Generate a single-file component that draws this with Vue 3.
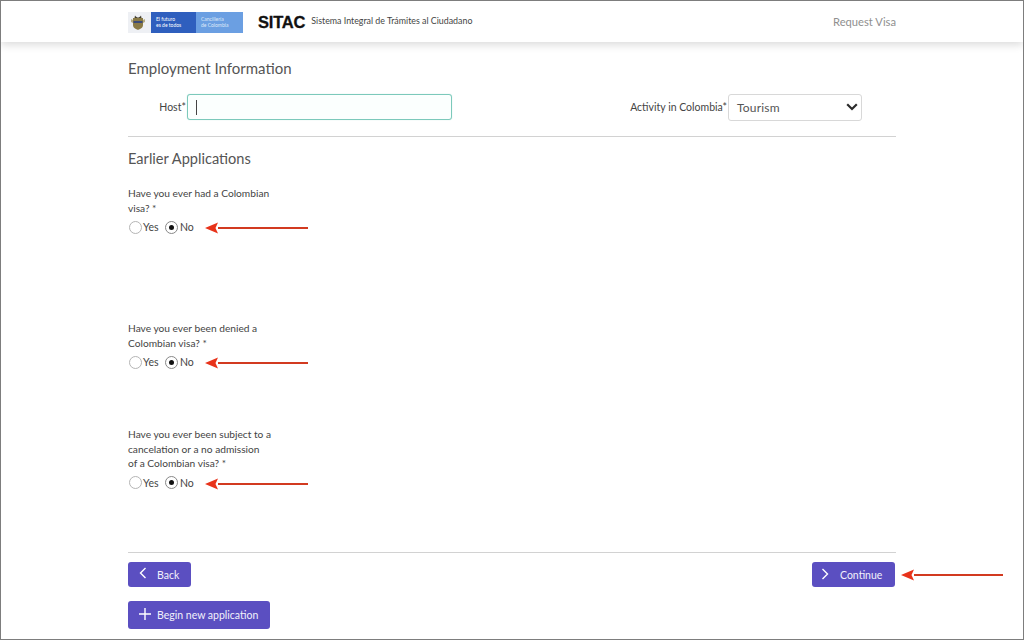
<script setup>
const questions = [
  { lines: ['Have you ever had a Colombian', 'visa? *'], gap: 'first' },
  { lines: ['Have you ever been denied a', 'Colombian visa? *'], gap: 'second' },
  { lines: ['Have you ever been subject to a', 'cancelation or a no admission', 'of a Colombian visa? *'], gap: 'third' }
]
</script>

<template>
  <div class="page">
    <header class="topbar">
      <div class="brand">
        <div class="gov">
          <span class="crest">
            <svg width="20" height="21" viewBox="0 0 20 21">
              <rect width="20" height="21" fill="#eef0f4" />
              <path d="M5 6h10v7c0 3-3 4-5 5-2-1-5-2-5-5z" fill="#8a7a45" />
              <path d="M5.500 9h9v2h-9z" fill="#3a4a78" />
              <path d="M7 3.500c1 1.500 2 2 3 2s2-.5 3-2l.5 2.500h-7z" fill="#3f3a2a" />
              <path d="M3 7l2 1v3L3 10zM17 7l-2 1v3l2-1z" fill="#b7ac82" />
            </svg>
          </span>
          <span class="gov-dark"><span>El futuro</span><span>es de todos</span></span>
          <span class="gov-light"><span>Cancillería</span><span>de Colombia</span></span>
        </div>
        <span class="sitac">SITAC</span>
        <span class="tagline">Sistema Integral de Trámites al Ciudadano</span>
      </div>
      <a class="nav-link">Request Visa</a>
    </header>

    <main class="content">
      <h2 class="heading first-heading">Employment Information</h2>
      <div class="form-row">
        <label class="field host-field">
          <span class="field-label">Host*</span>
          <span class="host-input"><i class="caret"></i></span>
        </label>
        <label class="field activity-field">
          <span class="field-label">Activity in Colombia*</span>
          <span class="select">
            <span>Tourism</span>
            <svg width="12" height="8" viewBox="0 0 12 8"><path d="M1.200 1.300L6 6l4.800-4.700" fill="none" stroke="#2b2b2b" stroke-width="2.200" /></svg>
          </span>
        </label>
      </div>
      <hr class="rule" />

      <h2 class="heading second-heading">Earlier Applications</h2>
      <section v-for="q in questions" :key="q.gap" class="question" :class="q.gap">
        <p class="q-text"><span v-for="line in q.lines" :key="line">{{ line }}</span></p>
        <div class="radios">
          <span class="radio"></span><span class="radio-label yes">Yes</span>
          <span class="radio checked"></span><span class="radio-label">No</span>
          <svg class="arrow" width="105" height="12" viewBox="0 0 105 12">
            <path d="M14 6h90" stroke="#d23a20" stroke-width="2" />
            <path d="M1 6l13-5.500-2.500 5.500 2.500 5.500z" fill="#e8331a" />
          </svg>
        </div>
      </section>

      <hr class="rule bottom-rule" />
      <div class="actions">
        <button class="btn back">
          <svg width="8" height="12" viewBox="0 0 8 12"><path d="M6.500 1L1.500 6l5 5" fill="none" stroke="#fff" stroke-width="1.400" /></svg>
          <span>Back</span>
        </button>
        <div class="continue-wrap">
          <button class="btn continue">
            <svg width="8" height="12" viewBox="0 0 8 12"><path d="M1.500 1l5 5-5 5" fill="none" stroke="#fff" stroke-width="1.400" /></svg>
            <span>Continue</span>
          </button>
          <svg class="arrow continue-arrow" width="104" height="12" viewBox="0 0 104 12">
            <path d="M14 6h89" stroke="#d23a20" stroke-width="2" />
            <path d="M1 6l13-5.500-2.500 5.500 2.500 5.500z" fill="#e8331a" />
          </svg>
        </div>
      </div>
      <button class="btn begin">
        <svg width="12" height="12" viewBox="0 0 12 12"><path d="M6 0v12M0 6h12" stroke="#fff" stroke-width="1.400" /></svg>
        <span>Begin new application</span>
      </button>
    </main>
  </div>
</template>

<style scoped>
.page {
  box-sizing: border-box;
  width: 1024px;
  height: 640px;
  overflow: hidden;
  background: #fff;
  border: 1px solid #7d7d7d;
  font-family: Lato, "Liberation Sans", sans-serif;
  color: #444;
}
.topbar {
  box-sizing: border-box;
  height: 41px;
  padding: 0 127px 0 127px;
  display: flex;
  align-items: center;
  justify-content: space-between;
  background: #fff;
  box-shadow: 0 3px 8px rgba(0, 0, 0, 0.14);
}
.brand {
  display: flex;
  align-items: center;
  margin-top: 1px;
}
.gov {
  display: flex;
  height: 21px;
  width: 115px;
}
.crest {
  width: 23px;
  display: block;
  background: #eef0f4;
}
.crest svg { display: block; }
.gov-dark,
.gov-light {
  display: flex;
  flex-direction: column;
  justify-content: center;
  color: #fff;
  font-size: 5px;
  line-height: 6px;
  padding-left: 5px;
}
.gov-dark { width: 40px; background: #2f5fbe; }
.gov-light { width: 42px; background: #6b9fe2; color: #dfeaf9; }
.sitac {
  margin-left: 15px;
  font-family: "Liberation Sans", Arial, sans-serif;
  font-weight: 700;
  font-size: 16.500px;
  letter-spacing: -0.200px;
  -webkit-text-stroke: 0.300px #111;
  color: #111;
}
.tagline {
  margin-left: 6px;
  margin-top: -3px;
  font-size: 8.850px;
  color: #444;
  white-space: nowrap;
}
.nav-link {
  font-size: 11.200px;
  color: #8f8f8f;
}
.content {
  padding: 0 127px;
}
.heading {
  margin: 0;
  font-weight: 400;
  font-size: 15px;
  line-height: 20px;
  color: #555;
}
.first-heading { padding-top: 16px; }
.form-row {
  margin-top: 15.500px;
  display: flex;
  justify-content: space-between;
  padding-left: 31.300px;
  padding-right: 34px;
}
.field {
  display: flex;
  align-items: center;
}
.field-label {
  font-size: 10.500px;
  color: #444;
}
.host-input {
  box-sizing: border-box;
  margin-left: 1px;
  width: 265px;
  height: 26px;
  border: 1px solid #7cc9bb;
  border-radius: 3px;
  background: #fbfffe;
  box-shadow: 0 0 1px #a9ded3;
  display: flex;
  align-items: center;
  padding-left: 8px;
}
.caret {
  display: block;
  width: 1px;
  height: 15px;
  background: #444;
}
.select {
  box-sizing: border-box;
  margin-left: 1px;
  width: 134px;
  height: 27px;
  border: 1px solid #d8d8d8;
  border-radius: 3px;
  display: flex;
  align-items: center;
  justify-content: space-between;
  padding: 0 3px 0 8px;
  font-size: 12px;
  color: #555;
  letter-spacing: 0.200px;
}
.rule {
  margin: 0;
  border: 0;
  height: 1px;
  background: #d2d2d2;
}
.form-row + .rule { margin-top: 15.500px; }
.second-heading { padding-top: 12px; font-size: 14.600px; }
.second-heading + .question { margin-top: 17px; }
.question { position: relative; }
.first { height: 135px; }
.second { height: 106px; }
.third { height: 125px; }
.q-text {
  margin: 0;
  font-size: 10.200px;
  line-height: 14.500px;
  color: #444;
  display: flex;
  flex-direction: column;
}
.radios {
  display: flex;
  align-items: center;
  margin-top: 5px;
  height: 14px;
  position: relative;
}
.radio {
  box-sizing: border-box;
  width: 13px;
  height: 13px;
  margin-left: 1px;
  border: 1px solid #b5b5b5;
  border-radius: 50%;
  background: #fff;
  position: relative;
}
.checked { border-color: #888; margin-left: 0; }
.checked::after {
  content: "";
  position: absolute;
  left: 3px;
  top: 3px;
  width: 5px;
  height: 5px;
  border-radius: 50%;
  background: #111;
}
.radio-label {
  margin: 0 6px 0 2px;
  font-size: 10.500px;
  color: #444;
}
.yes { margin-left: 1px; margin-right: 6.500px; }
.arrow {
  position: absolute;
  left: 76px;
  top: 2px;
}
.actions {
  margin-top: 9px;
  padding-right: 1px;
  display: flex;
  justify-content: space-between;
}
.continue-wrap { position: relative; }
.continue-arrow {
  left: 88px;
  top: 7px;
}
.btn {
  box-sizing: border-box;
  border: 0;
  border-radius: 3px;
  background: #5b4fc1;
  color: #f2f1fb;
  font-family: Lato, "Liberation Sans", sans-serif;
  font-size: 10.500px;
  display: flex;
  align-items: center;
  padding: 0;
}
.back { width: 63px; height: 25px; padding-left: 11px; gap: 10px; }
.back svg { margin-top: -3px; }
.continue { width: 83px; height: 25px; padding-left: 9px; gap: 11px; }
.continue svg { margin-top: -2px; }
.begin {
  margin-top: 14px;
  width: 142px;
  height: 28px;
  padding-left: 11px;
  gap: 6px;
}
.begin svg { margin-top: -2px; }
</style>

<style>
html, body { margin: 0; background: #fff; }
</style>
